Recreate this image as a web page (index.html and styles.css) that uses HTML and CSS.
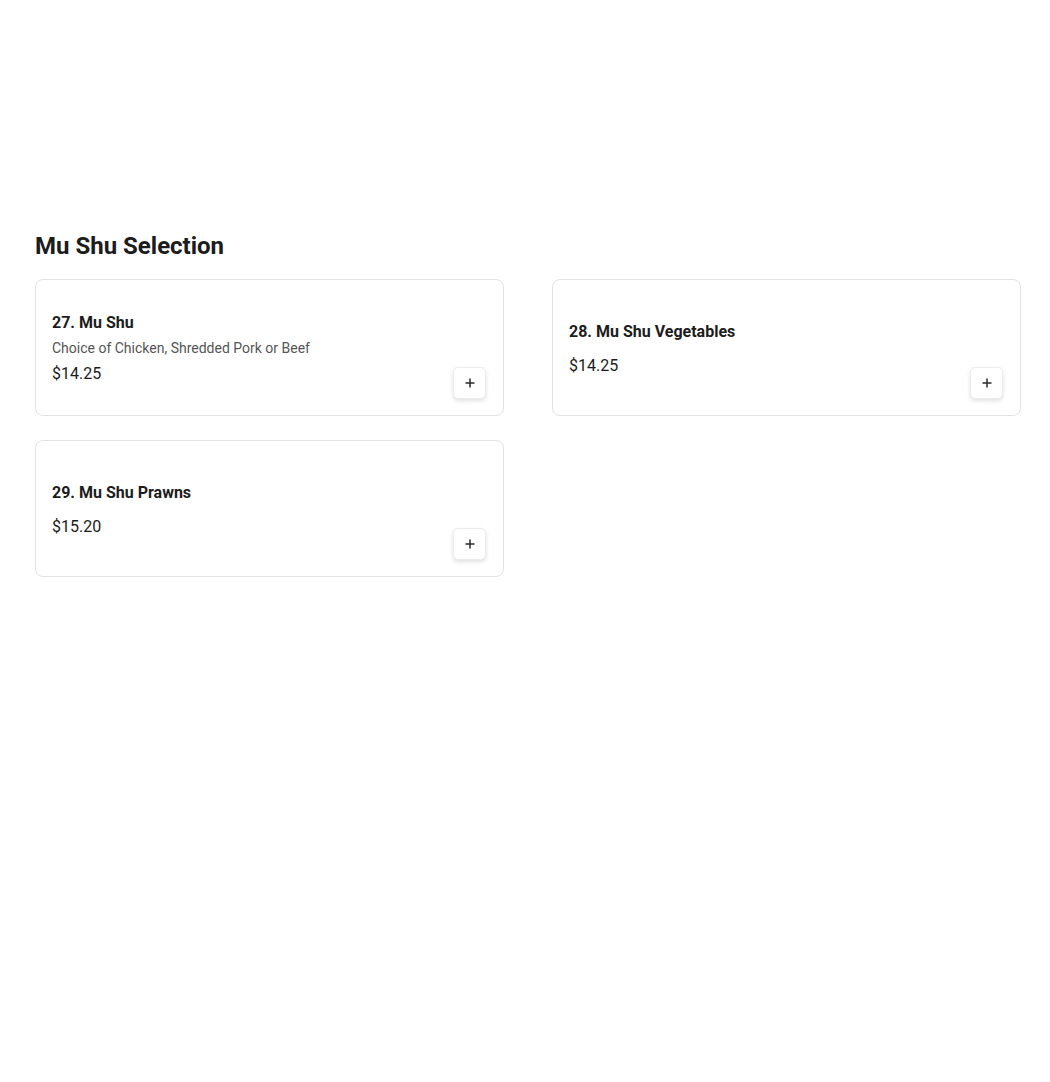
FILE: index.html
```html
<!DOCTYPE html>
<html>
<head>
<meta charset="utf-8">
<link rel="stylesheet" href="styles.css">
</head>
<body>
<main class="page">
  <section class="menu-section">
    <h2 class="section-title">Mu Shu Selection</h2>
    <div class="grid">
      <div class="card">
        <div class="info">
          <div class="name">27. Mu Shu</div>
          <div class="desc">Choice of Chicken, Shredded Pork or Beef</div>
          <div class="price">$14.25</div>
        </div>
        <button class="add" aria-label="Add"><svg width="12" height="12" viewBox="0 0 12 12"><path d="M6 1.5v9M1.5 6h9" stroke="#2a2a2a" stroke-width="1.5" stroke-linecap="butt"/></svg></button>
      </div>
      <div class="card">
        <div class="info">
          <div class="name">28. Mu Shu Vegetables</div>
          <div class="price no-desc">$14.25</div>
        </div>
        <button class="add" aria-label="Add"><svg width="12" height="12" viewBox="0 0 12 12"><path d="M6 1.5v9M1.5 6h9" stroke="#2a2a2a" stroke-width="1.5" stroke-linecap="butt"/></svg></button>
      </div>
      <div class="card">
        <div class="info">
          <div class="name">29. Mu Shu Prawns</div>
          <div class="price no-desc">$15.20</div>
        </div>
        <button class="add" aria-label="Add"><svg width="12" height="12" viewBox="0 0 12 12"><path d="M6 1.5v9M1.5 6h9" stroke="#2a2a2a" stroke-width="1.5" stroke-linecap="butt"/></svg></button>
      </div>
    </div>
  </section>
</main>
</body>
</html>
```
FILE: styles.css
```css
* { box-sizing: border-box; }
html, body { margin: 0; padding: 0; background: #fff; }
body {
  font-family: Roboto, "Liberation Sans", Arial, sans-serif;
  color: #1c1c1c;
}
.page {
  padding: 230px 29px 0 35px;
}
.section-title {
  margin: 0 0 17px 0;
  font-size: 24px;
  line-height: 32px;
  font-weight: 700;
  color: #1c1c1c;
}
.grid {
  display: grid;
  grid-template-columns: 1fr 1fr;
  column-gap: 48px;
  row-gap: 24px;
}
.card {
  display: flex;
  align-items: center;
  min-height: 137px;
  padding: 16px 17px 16px 16px;
  border: 1px solid #e3e3e3;
  border-radius: 8px;
  background: #fff;
}
.info {
  flex: 1;
  display: flex;
  flex-direction: column;
  padding-top: 2px;
}
.name {
  font-size: 16px;
  line-height: 24px;
  font-weight: 700;
  color: #1c1c1c;
}
.desc {
  margin-top: 3px;
  font-size: 14px;
  line-height: 20px;
  color: #555;
}
.price {
  margin-top: 4px;
  font-size: 16px;
  line-height: 24px;
  color: #1c1c1c;
}
.price.no-desc { margin-top: 10px; }
.add {
  align-self: flex-end;
  width: 33px;
  height: 32px;
  padding: 0;
  display: flex;
  align-items: center;
  justify-content: center;
  background: #fff;
  border: 1px solid #ececec;
  border-radius: 5px;
  box-shadow: 0 2px 4px rgba(0,0,0,0.12);
  cursor: pointer;
}
.add svg { display: block; }
```
